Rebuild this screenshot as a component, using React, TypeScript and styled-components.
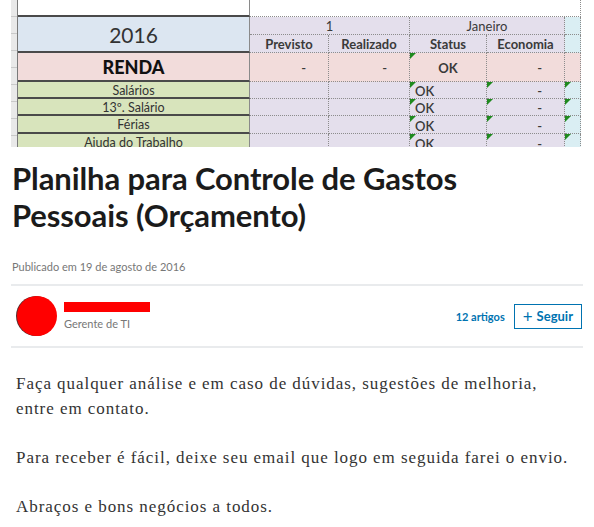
import React from "react";
import styled, { createGlobalStyle, css } from "styled-components";

const GlobalStyle = createGlobalStyle`
    html, body {
        margin: 0;
        padding: 0;
        background: #fff;
    }
    body {
        font-family: "Lato", "Liberation Sans", sans-serif;
    }
`;

const C = {
    white: "#ffffff",
    blue: "#dce6f1",
    pink: "#f2dcdb",
    green: "#d8e4bc",
    lavender: "#e4dfec",
    cyan: "#daeef3",
};

type Tone = keyof typeof C;

const incomeRows = ["Salários", "13º. Salário", "Férias", "Ajuda do Trabalho"];

export default function App() {
    return (
        <>
            <GlobalStyle />
            <Page>
                <Sheet>
                    <Gutter style={{ gridRow: "1 / span 8" }} />
                    <LabelCell tone="white" />
                    <ValueCell tone="white" style={{ gridColumn: "3 / span 5" }} />

                    <LabelCell tone="blue" style={{ gridRow: "2 / span 2" }}>
                        <YearText>2016</YearText>
                    </LabelCell>
                    <HeadCell style={{ gridColumn: "3 / span 2" }}>1</HeadCell>
                    <HeadCell style={{ gridColumn: "5 / span 2" }}>Janeiro</HeadCell>
                    <ValueCell tone="cyan" />
                    <HeadCell bold>Previsto</HeadCell>
                    <HeadCell bold>Realizado</HeadCell>
                    <HeadCell bold>Status</HeadCell>
                    <HeadCell bold>Economia</HeadCell>
                    <ValueCell tone="cyan" />

                    <LabelCell tone="pink">
                        <RendaText>RENDA</RendaText>
                    </LabelCell>
                    <ValueCell tone="pink" align="end">-</ValueCell>
                    <ValueCell tone="pink" align="end">-</ValueCell>
                    <ValueCell tone="pink" align="center" flag strong>OK</ValueCell>
                    <ValueCell tone="pink" align="end">-</ValueCell>
                    <ValueCell tone="pink" />

                    {incomeRows.map((label) => (
                        <React.Fragment key={label}>
                            <LabelCell tone="green">
                                <RowText>{label}</RowText>
                            </LabelCell>
                            <ValueCell tone="lavender" />
                            <ValueCell tone="lavender" />
                            <ValueCell tone="lavender" align="start" flag>OK</ValueCell>
                            <ValueCell tone="lavender" align="end" flag>-</ValueCell>
                            <ValueCell tone="cyan" flag />
                        </React.Fragment>
                    ))}
                </Sheet>

                <Article>
                    <Title>Planilha para Controle de Gastos Pessoais (Orçamento)</Title>
                    <Published>Publicado em 19 de agosto de 2016</Published>

                    <AuthorBar>
                        <Avatar />
                        <AuthorInfo>
                            <NameRedaction />
                            <Headline>Gerente de TI</Headline>
                        </AuthorInfo>
                        <ArticleCount>12 artigos</ArticleCount>
                        <FollowButton>
                            <span>+</span> Seguir
                        </FollowButton>
                    </AuthorBar>

                    <Body>
                        <p>Faça qualquer análise e em caso de dúvidas, sugestões de melhoria, entre em contato.</p>
                        <p>Para receber é fácil, deixe seu email que logo em seguida farei o envio.</p>
                        <p>Abraços e bons negócios a todos.</p>
                    </Body>
                </Article>
            </Page>
        </>
    );
}

const Page = styled.div`
    width: 594px;
    height: 527px;
    overflow: hidden;
    background: #fff;
`;

/* ---------- spreadsheet header picture ---------- */

const Sheet = styled.div`
    display: grid;
    width: 581px;
    height: 147px;
    overflow: hidden;
    grid-template-columns: 18px 232px 79px 81px 77px 78px 16px;
    grid-template-rows: 17px 18px 18px 29px 17px 17px 18px 18px;
    font-family: "Lato", "Liberation Sans", sans-serif;
    color: #2b2b2b;
`;

const Gutter = styled.div`
    grid-column: 1;
    background:
        repeating-linear-gradient(
            to bottom,
            transparent 0,
            transparent 16px,
            #c9c9c9 16px,
            #c9c9c9 17px
        ) 11px 0 / 6px 100% no-repeat,
        linear-gradient(#e9e9e9, #e9e9e9) 11px 0 / 6px 100% no-repeat,
        linear-gradient(#bdbdbd, #bdbdbd) 11px 0 / 1px 100% no-repeat,
        #fff;
    border-right: 1px solid #7a7a7a;
`;

const LabelCell = styled.div<{ tone: Tone }>`
    grid-column: 2;
    background: ${(p) => C[p.tone]};
    border-right: 1px solid #8a8a8a;
    border-bottom: 2px solid #4a4a4a;
    display: flex;
    align-items: center;
    justify-content: center;
    overflow: hidden;
    white-space: nowrap;
`;

const YearText = styled.span`
    font-size: 21px;
    color: #333;
`;

const RendaText = styled.span`
    font-size: 18px;
    font-weight: 900;
    color: #111;
`;

const RowText = styled.span`
    font-size: 12.5px;
    color: #333;
    padding-top: 1px;
`;

const dotted = css`
    border-right: 1px dotted #8c8c8c;
    border-bottom: 1px dotted #8c8c8c;
`;

const HeadCell = styled.div<{ bold?: boolean }>`
    ${dotted};
    background: ${C.lavender};
    display: flex;
    align-items: center;
    justify-content: center;
    font-size: 13px;
    font-weight: ${(p) => (p.bold ? 700 : 400)};
    color: #3a3a3a;
`;

const ValueCell = styled.div<{
    tone: Tone;
    align?: "start" | "center" | "end";
    flag?: boolean;
    strong?: boolean;
}>`
    ${dotted};
    position: relative;
    background: ${(p) => C[p.tone]};
    display: flex;
    align-items: center;
    justify-content: ${(p) =>
        p.align === "start" ? "flex-start" : p.align === "end" ? "flex-end" : "center"};
    padding: ${(p) => (p.align === "start" ? "2px 0 0 5px" : p.align === "end" ? "2px 22px 0 0" : "2px 0 0")};
    font-size: 13px;
    font-weight: ${(p) => (p.strong ? 700 : 600)};
    color: #3a3a3a;
    overflow: hidden;

    ${(p) =>
        p.flag &&
        css`
            &::before {
                content: "";
                position: absolute;
                left: 0;
                top: 0;
                border-top: 6px solid #1f8a1f;
                border-right: 6px solid transparent;
            }
        `}
`;

/* ---------- article ---------- */

const Article = styled.article`
    padding: 0 11px 0 11px;
`;

const Title = styled.h1`
    margin: 13px 0 0 1px;
    width: 470px;
    font-family: "Lato", "Liberation Sans", sans-serif;
    font-size: 31px;
    line-height: 37px;
    font-weight: 700;
    color: #1b1b1b;
    letter-spacing: -0.1px;
`;

const Published = styled.div`
    margin: 26px 0 0 1px;
    font-size: 11px;
    color: #777;
`;

const AuthorBar = styled.div`
    margin-top: 11px;
    height: 60px;
    display: flex;
    align-items: center;
    border-top: 2px solid #e9ebed;
    border-bottom: 2px solid #e9ebed;
`;

const Avatar = styled.div`
    width: 40px;
    height: 40px;
    margin-left: 6px;
    border-radius: 50%;
    background: #ff0000;
    box-shadow: -1px 0 0 #5a2a2a;
`;

const AuthorInfo = styled.div`
    display: flex;
    flex-direction: column;
    gap: 5px;
    margin-left: 7px;
    flex: 1;
`;

const NameRedaction = styled.div`
    width: 86px;
    height: 10px;
    background: #ff0000;
`;

const Headline = styled.div`
    font-size: 11px;
    color: #777;
`;

const ArticleCount = styled.div`
    font-size: 11px;
    font-weight: 700;
    color: #0073b1;
    margin-right: 9px;
`;

const FollowButton = styled.button`
    height: 25px;
    margin-right: 1px;
    padding: 0 8px;
    border: 1px solid #0073b1;
    background: #fff;
    color: #0073b1;
    font-family: "Lato", "Liberation Sans", sans-serif;
    font-size: 13px;
    font-weight: 700;
    display: flex;
    align-items: center;

    span {
        font-size: 17px;
        font-weight: 400;
        margin-right: 4px;
    }
`;

const Body = styled.div`
    padding: 23px 11px 0 5px;
    font-family: "Liberation Serif", "Times New Roman", serif;
    font-size: 17px;
    letter-spacing: 0.95px;
    line-height: 25px;
    color: #333;

    p {
        margin: 0 0 24px;
    }
`;
